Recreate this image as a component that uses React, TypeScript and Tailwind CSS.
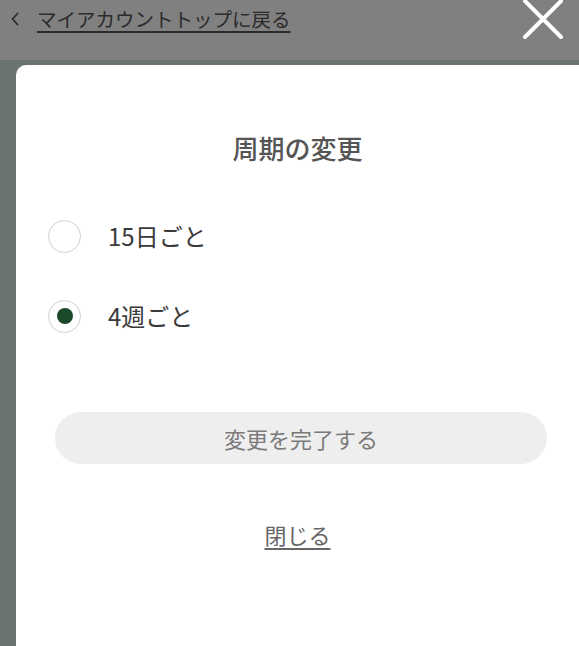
import { useState } from "react";

const OPTIONS = ["15日ごと", "4週ごと"];

export default function App() {
  const [selected, setSelected] = useState(1);

  return (
    <div className="flex h-[646px] w-[579px] flex-col overflow-hidden bg-[#6b7470] font-['Noto_Sans_CJK_JP','Noto_Sans',sans-serif]">
      {/* dimmed page header */}
      <div className="flex h-[60px] shrink-0 items-start justify-between bg-[#808080] pl-[11px] pr-[14px]">
        <div className="mt-[5px] flex items-center gap-[18px] text-[#2b2b2b]">
          <svg width="8" height="14" viewBox="0 0 8 14" aria-hidden>
            <path d="M6.5 1.5 L1.5 7 L6.5 12.5" fill="none" stroke="#2b2b2b" strokeWidth="1.8" strokeLinecap="round" strokeLinejoin="round" />
          </svg>
          <span className="text-[19.5px] leading-[28px] underline decoration-[1.5px] underline-offset-[4px]">
            マイアカウントトップに戻る
          </span>
        </div>
        <svg width="44" height="44" viewBox="0 0 44 44" className="-mt-[2px]" aria-hidden>
          <path d="M4 3 L40 39 M40 3 L4 39" stroke="#ffffff" strokeWidth="4" strokeLinecap="round" />
        </svg>
      </div>

      {/* modal sheet */}
      <div className="mt-[5px] ml-[16px] flex flex-1 flex-col rounded-tl-[10px] bg-white">
        <h2 className="pt-[66px] text-center text-[26px] font-medium leading-[34px] text-[#555555]">
          周期の変更
        </h2>

        <div className="mt-[51px] flex flex-col gap-[40px] pl-[32px]">
          {OPTIONS.map((label, i) => (
            <button
              key={label}
              onClick={() => setSelected(i)}
              className="flex h-[40px] items-center gap-[27px] text-left"
            >
              <span className="flex h-[33px] w-[33px] items-center justify-center rounded-full border-[1.5px] border-[#cfcfcf] bg-white">
                {selected === i && <span className="h-[16px] w-[16px] rounded-full bg-[#1b4a2a]" />}
              </span>
              <span className="text-[24px] leading-[40px] text-[#3a3a3a]">{label}</span>
            </button>
          ))}
        </div>

        <button className="mt-[76px] ml-[39px] mr-[32px] flex h-[52px] items-center justify-center rounded-full bg-[#eeeeee] text-[22px] text-[#7a7a7a]">
          変更を完了する
        </button>

        <div className="mt-[54px] text-center">
          <span className="text-[22px] leading-[32px] text-[#666666] underline decoration-[1.5px] underline-offset-[4px]">
            閉じる
          </span>
        </div>
      </div>
    </div>
  );
}
